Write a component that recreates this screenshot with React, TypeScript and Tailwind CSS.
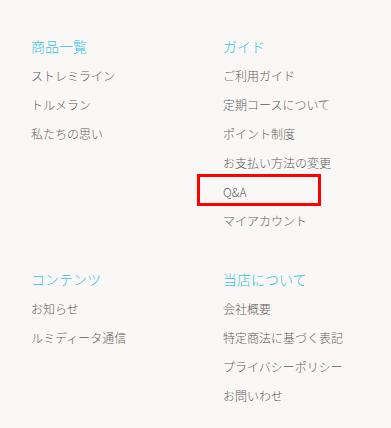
const sections = [
  {
    title: "商品一覧",
    items: ["ストレミライン", "トルメラン", "私たちの思い"],
  },
  {
    title: "ガイド",
    items: [
      "ご利用ガイド",
      "定期コースについて",
      "ポイント制度",
      "お支払い方法の変更",
      "Q&A",
      "マイアカウント",
    ],
  },
  {
    title: "コンテンツ",
    items: ["お知らせ", "ルミディータ通信"],
  },
  {
    title: "当店について",
    items: ["会社概要", "特定商法に基づく表記", "プライバシーポリシー", "お問いわせ"],
  },
];

const App = () => {
  return (
    <div
      className="relative w-[391px] h-[428px] bg-[#f9f8f6] overflow-hidden"
      style={{ fontFamily: '"Noto Sans CJK JP", "Noto Sans", sans-serif' }}
    >
      <div className="grid grid-cols-[192px_1fr] gap-y-[30px] pl-[31px] pt-[32px]">
        {sections.map((section) => (
          <div key={section.title} className="flex flex-col">
            <h3 className="text-[14px] leading-[29px] text-[#3cc0da] font-light">
              {section.title}
            </h3>
            <ul>
              {section.items.map((item) => (
                <li key={item} className="text-[12px] leading-[29px] text-[#5f5d5d] font-light">
                  <a href="#">{item}</a>
                </li>
              ))}
            </ul>
          </div>
        ))}
      </div>

      {/* highlight box */}
      <div className="absolute left-[197px] top-[174px] w-[124px] h-[32px] border-[3px] border-[#ff0000]"></div>
    </div>
  );
};

export default App;
